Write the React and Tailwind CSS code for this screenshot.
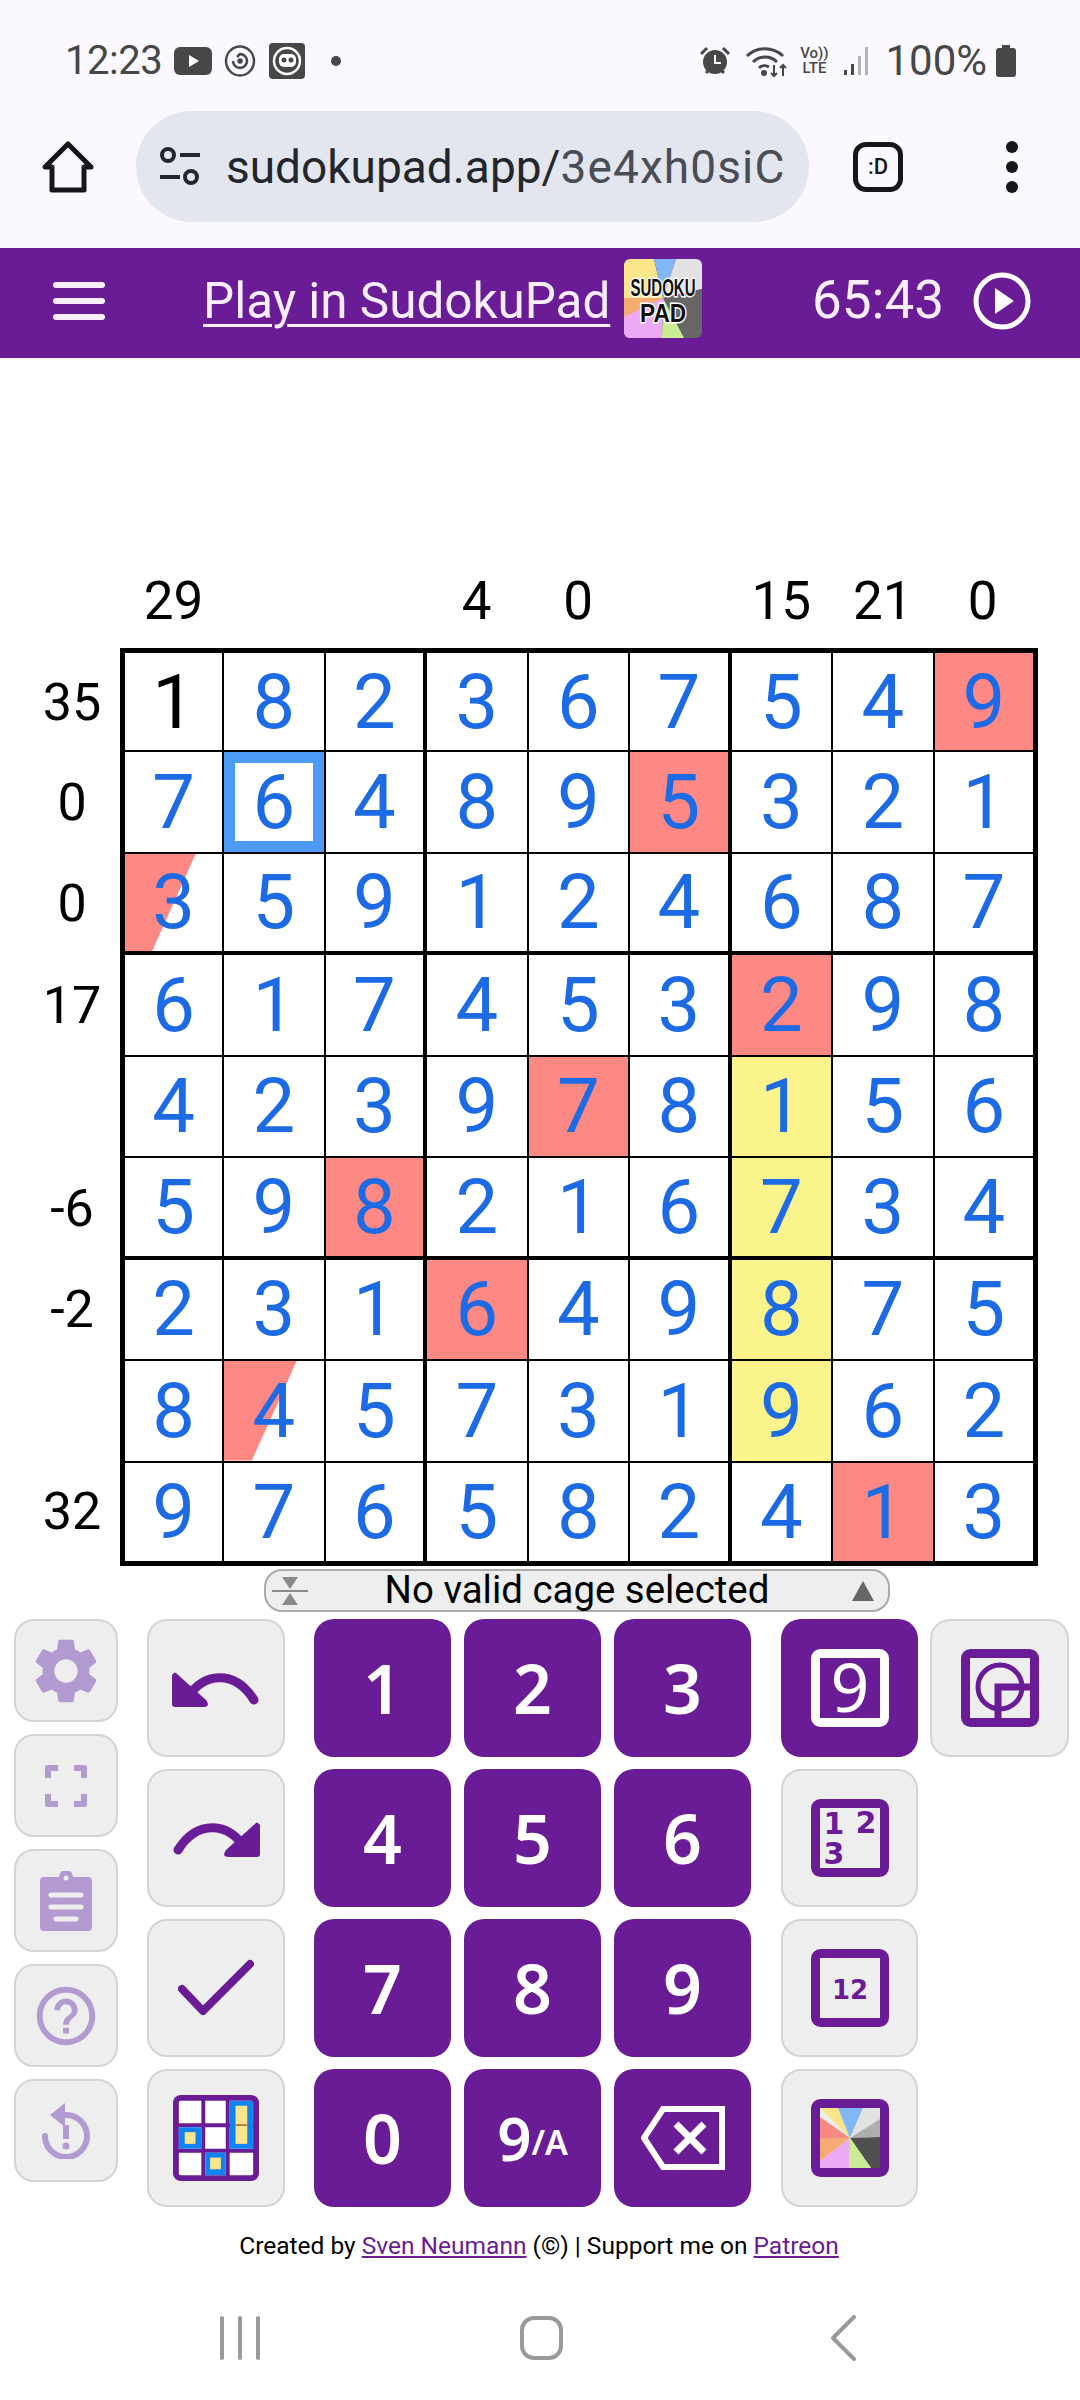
import React from 'react';

const PURPLE = '#6a1b96';

const digits = [
  [1, 8, 2, 3, 6, 7, 5, 4, 9],
  [7, 6, 4, 8, 9, 5, 3, 2, 1],
  [3, 5, 9, 1, 2, 4, 6, 8, 7],
  [6, 1, 7, 4, 5, 3, 2, 9, 8],
  [4, 2, 3, 9, 7, 8, 1, 5, 6],
  [5, 9, 8, 2, 1, 6, 7, 3, 4],
  [2, 3, 1, 6, 4, 9, 8, 7, 5],
  [8, 4, 5, 7, 3, 1, 9, 6, 2],
  [9, 7, 6, 5, 8, 2, 4, 1, 3],
];
const red = ['0-8', '1-5', '3-6', '4-4', '5-2', '6-3', '8-7'];
const yellow = ['4-6', '5-6', '6-6', '7-6'];
const half = ['2-0', '7-1'];
const topClues = ['29', '', '', '4', '0', '', '15', '21', '0'];
const leftClues = ['35', '0', '0', '17', '', '-6', '-2', '', '32'];

const Cell = ({ r, c, value }) => {
  const key = `${r}-${c}`;
  const right = c === 8 ? '' : c === 2 || c === 5 ? 'border-r-[4px]' : 'border-r-2';
  const bottom = r === 8 ? '' : r === 2 || r === 5 ? 'border-b-[4px]' : 'border-b-2';
  const bg = red.includes(key) ? 'bg-[#fd8884]' : yellow.includes(key) ? 'bg-[#fbf38c]' : 'bg-white';
  const given = key === '0-0';
  return (
    <div className={`relative flex items-center justify-center border-black ${right} ${bottom} ${bg}`}>
      {half.includes(key) && (
        <div className="absolute inset-0 bg-[#fd8884] [clip-path:polygon(0_0,73%_0,28%_100%,0_100%)]" />
      )}
      {key === '1-1' && <div className="absolute inset-0 border-[11px] border-[#4b9bf7]" />}
      <span className={`relative text-[76px] leading-none ${given ? 'text-black' : 'text-[#1d6ae5]'}`}>{value}</span>
    </div>
  );
};

const LightBtn = ({ className, children }) => (
  <div className={`flex items-center justify-center rounded-[20px] border-2 border-[#d4d4d4] bg-[#eeeeee] ${className}`}>
    {children}
  </div>
);

const NumBtn = ({ children }) => (
  <div className="flex h-[138px] items-center justify-center rounded-[20px] bg-[#6a1b96] pb-[1px] font-['Noto_Sans',sans-serif] text-[68px] font-semibold leading-none text-white">
    {children}
  </div>
);

const Frame = ({ children, color = PURPLE }) => (
  <svg width="78" height="78" viewBox="0 0 78 78">
    <rect x="4.5" y="4.5" width="69" height="69" rx="5" fill="none" stroke={color} strokeWidth="9" />
    {children}
  </svg>
);

const wedges = [
  ['M39 39L9 9H27Z', '#fbe58a'],
  ['M39 39L27 9H52Z', '#7fb8f5'],
  ['M39 39L52 9H69V20Z', '#e2e2e2'],
  ['M39 39L69 20V38Z', '#aeaeae'],
  ['M39 39L69 38V69H60Z', '#505050'],
  ['M39 39L60 69H38Z', '#c9ec94'],
  ['M39 39L38 69H9V62Z', '#ecaaf5'],
  ['M39 39L9 62V40Z', '#f6ab72'],
  ['M39 39L9 40V18Z', '#f68a80'],
];

export default function App() {
  return (
    <div className="flex h-[2400px] w-[1080px] flex-col overflow-hidden bg-white font-[Roboto,sans-serif]">
      {/* status bar + browser bar */}
      <div className="h-[248px] bg-[#fbf9ff]">
        <div className="flex h-[111px] items-center pl-[65px] pr-[64px] pt-[11px] text-[#474747]">
          <span className="w-[109px] text-[40px] leading-none tracking-[-0.5px]">12:23</span>
          <svg width="38" height="28" viewBox="0 0 38 28">
            <rect width="38" height="28" rx="6" fill="#474747" />
            <path d="M15 8l10 6-10 6z" fill="#fff" />
          </svg>
          <svg className="ml-[11px]" width="34" height="32" viewBox="0 0 34 32" fill="none" stroke="#474747" strokeWidth="2.5">
            <ellipse cx="17" cy="16" rx="14" ry="14.5" />
            <path d="M10 16a7 7 0 1 0 7-7l-3 3" />
            <circle cx="17" cy="16" r="1.5" fill="#474747" />
          </svg>
          <svg className="ml-[12px]" width="36" height="36" viewBox="0 0 36 36">
            <rect width="36" height="36" rx="4" fill="#474747" />
            <circle cx="18" cy="18" r="13" fill="none" stroke="#fff" strokeWidth="2.5" />
            <rect x="10" y="11" width="17" height="13" rx="5" fill="#fff" />
            <circle cx="15" cy="17" r="2.5" fill="#474747" />
            <circle cx="22" cy="17" r="2.5" fill="#474747" />
          </svg>
          <span className="ml-[26px] h-[10px] w-[10px] rounded-full bg-[#474747]" />
          <div className="flex-1" />
          <svg width="30" height="30" viewBox="0 0 30 30">
            <circle cx="15" cy="16" r="12" fill="#474747" />
            <path d="M15 9v8h6" fill="none" stroke="#fff" strokeWidth="2" />
            <path d="M1 8l6-6M29 8l-6-6M6 27l3-3M24 27l-3-3" stroke="#474747" strokeWidth="3" />
          </svg>
          <svg className="ml-[15px]" width="44" height="32" viewBox="0 0 44 32" fill="none" stroke="#474747" strokeWidth="3">
            <path d="M2 11a26 26 0 0 1 36 0M8 17a17 17 0 0 1 24 0M14 23a8 8 0 0 1 10-1" />
            <circle cx="19" cy="28" r="1.5" fill="#474747" />
            <path d="M29 20v11M26 28l3 3 3-3M38 31V20M35 23l3-3 3 3" strokeWidth="2" />
          </svg>
          <div className="ml-[9px] flex w-[32px] flex-col items-center text-[15px] font-medium leading-[15px]">
            <span>Vo))</span>
            <span>LTE</span>
          </div>
          <svg className="ml-[14px]" width="26" height="30" viewBox="0 0 26 30">
            <rect x="0" y="24" width="3" height="5" fill="#474747" />
            <rect x="7" y="18" width="3" height="11" fill="#474747" />
            <rect x="14" y="10" width="3" height="19" fill="#b5b5b5" />
            <rect x="21" y="1" width="3" height="28" fill="#b5b5b5" />
          </svg>
          <span className="ml-[15px] text-[42px] leading-none">100%</span>
          <svg className="ml-[9px]" width="20" height="32" viewBox="0 0 20 32">
            <path d="M6 0h8v3h3a3 3 0 0 1 3 3v23a3 3 0 0 1-3 3H3a3 3 0 0 1-3-3V6a3 3 0 0 1 3-3h3z" fill="#474747" />
          </svg>
        </div>
        <div className="flex h-[111px] items-center">
          <svg className="ml-[41px]" width="54" height="54" viewBox="0 0 54 54" fill="none" stroke="#15171c" strokeWidth="5" strokeLinejoin="round">
            <path d="M27 4L4 27h7v23h32V27h7z" />
          </svg>
          <div className="ml-[41px] flex h-[111px] w-[673px] items-center rounded-full bg-[#e3e6ee]">
            <svg className="ml-[23px]" width="42" height="42" viewBox="0 0 42 42" fill="none" stroke="#23262c" strokeWidth="4">
              <circle cx="9" cy="9" r="6" />
              <path d="M21 9h20M1 31h20" />
              <circle cx="32" cy="31" r="6" />
            </svg>
            <div className="ml-[25px] w-[562px] overflow-hidden whitespace-nowrap text-[46px] leading-[56px] text-[#23262c]">
              sudokupad.app/<span className="tracking-[1.1px] text-[#4a4d55]">3e4xh0siC</span>
            </div>
          </div>
          <div className="ml-[44px] flex h-[50px] w-[50px] items-center justify-center rounded-[13px] border-[5px] border-[#15171c] text-[22px] font-medium leading-none text-[#15171c]">
            :D
          </div>
          <div className="ml-[103px] flex flex-col gap-[8px]">
            <span className="h-[12px] w-[12px] rounded-full bg-[#15171c]" />
            <span className="h-[12px] w-[12px] rounded-full bg-[#15171c]" />
            <span className="h-[12px] w-[12px] rounded-full bg-[#15171c]" />
          </div>
        </div>
      </div>

      {/* purple header */}
      <div className="flex h-[110px] items-center bg-[#6a1b96] pb-[5px] text-[#f8eefc]">
        <div className="ml-[53px] flex w-[52px] flex-col gap-[10px]">
          <span className="h-[6px] rounded-full bg-[#f8eefc]" />
          <span className="h-[6px] rounded-full bg-[#f8eefc]" />
          <span className="h-[6px] rounded-full bg-[#f8eefc]" />
        </div>
        <a className="ml-[98px] w-[410px] whitespace-nowrap text-[49.4px] leading-[58px] underline decoration-[3px] underline-offset-[6px]">
          Play in SudokuPad
        </a>
        <svg className="-mt-[4px] ml-[11px] rounded-[6px]" width="78" height="79" viewBox="0 0 78 79">
          <path d="M0 0H30L39 39L0 39Z" fill="#fbe58a" />
          <path d="M30 0H52L39 39Z" fill="#7fb8f5" />
          <path d="M52 0H78V30L39 39Z" fill="#e2e2e2" />
          <path d="M78 30V79H55L39 39Z" fill="#666" />
          <path d="M0 39H39L20 79H0Z" fill="#f6ab72" />
          <path d="M0 58L39 39L38 79H0Z" fill="#ecaaf5" />
          <path d="M39 39L38 79H60Z" fill="#c9ec94" />
          <text x="39" y="37" textAnchor="middle" fontFamily="'Liberation Sans',sans-serif" fontWeight="700" fontSize="24" textLength="65" lengthAdjust="spacingAndGlyphs" fill="#111" stroke="#fff" strokeWidth="3" paintOrder="stroke">SUDOKU</text>
          <text x="39" y="63" textAnchor="middle" fontFamily="'Liberation Sans',sans-serif" fontWeight="700" fontSize="25" textLength="46" lengthAdjust="spacingAndGlyphs" fill="#111" stroke="#fff" strokeWidth="3" paintOrder="stroke">PAD</text>
        </svg>
        <span className="ml-[110px] w-[131px] whitespace-nowrap text-[53px] leading-none">65:43</span>
        <svg className="ml-[30px]" width="58" height="58" viewBox="0 0 58 58">
          <circle cx="29" cy="29" r="26" fill="none" stroke="#fff" strokeWidth="5" />
          <path d="M22 16l19 13-19 13z" fill="#fff" />
        </svg>
      </div>

      {/* board */}
      <div className="ml-[120px] mt-[192px] grid h-[98px] w-[918px] grid-cols-[99px_repeat(7,101.5px)_98.5px] px-[5px] pt-[4px]">
        {topClues.map((t, i) => (
          <div key={i} className="flex items-center justify-center pr-[2px] text-[53px] leading-none text-black">{t}</div>
        ))}
      </div>
      <div className="flex h-[918px]">
        <div className="grid h-full w-[120px] grid-rows-[99px_repeat(7,101.5px)_98.5px] py-[5px] pl-[24px]">
          {leftClues.map((t, i) => (
            <div key={i} className="flex items-center justify-center text-[52px] leading-none text-black">{t}</div>
          ))}
        </div>
        <div className="grid h-full w-[918px] grid-cols-[99px_repeat(7,101.5px)_98.5px] grid-rows-[99px_repeat(7,101.5px)_98.5px] border-[5px] border-black">
          {digits.map((row, r) => row.map((v, c) => <Cell key={`${r}${c}`} r={r} c={c} value={v} />))}
        </div>
      </div>

      {/* cage selector */}
      <div className="ml-[264px] mt-[3px] flex h-[43px] w-[626px] items-center rounded-[18px] border-2 border-[#aaaaaa] bg-[#eeeeee] pl-[6px] pr-[14px]">
        <svg width="36" height="28" viewBox="0 0 36 28">
          <path d="M10 0h16l-8 12zM10 28h16l-8-12z" fill="#8a8a8a" />
          <path d="M0 14h36" stroke="#8a8a8a" strokeWidth="2" />
        </svg>
        <span className="flex-1 whitespace-nowrap pr-[6px] text-center text-[38.4px] leading-none text-black">No valid cage selected</span>
        <svg width="22" height="20" viewBox="0 0 22 20"><path d="M11 0l11 20H0z" fill="#666" /></svg>
      </div>

      {/* controls */}
      <div className="ml-[14px] mt-[7px] flex">
        <div className="flex w-[104px] flex-col gap-[12px]">
          <LightBtn className="h-[103px]">
            <svg width="78" height="78" viewBox="0 0 24 24" fill="#b39ad1">
              <path d="M19.14 12.94c.04-.3.06-.61.06-.94 0-.32-.02-.64-.07-.94l2.03-1.58c.18-.14.23-.41.12-.61l-1.92-3.32c-.12-.22-.37-.29-.59-.22l-2.39.96c-.5-.38-1.03-.7-1.62-.94l-.36-2.54c-.04-.24-.24-.41-.48-.41h-3.84c-.24 0-.43.17-.47.41l-.36 2.54c-.59.24-1.13.57-1.62.94l-2.39-.96c-.22-.08-.47 0-.59.22L2.74 8.87c-.12.21-.08.47.12.61l2.03 1.58c-.05.3-.09.63-.09.94s.02.64.07.94l-2.03 1.58c-.18.14-.23.41-.12.61l1.92 3.32c.12.22.37.29.59.22l2.39-.96c.5.38 1.03.7 1.62.94l.36 2.54c.05.24.24.41.48.41h3.84c.24 0 .44-.17.47-.41l.36-2.54c.59-.24 1.13-.56 1.62-.94l2.39.96c.22.08.47 0 .59-.22l1.92-3.32c.12-.22.07-.47-.12-.61l-2.01-1.58zM12 15.6c-1.98 0-3.6-1.62-3.6-3.6s1.62-3.6 3.6-3.6 3.6 1.62 3.6 3.6-1.62 3.6-3.6 3.6z" />
            </svg>
          </LightBtn>
          <LightBtn className="h-[103px]">
            <svg width="42" height="42" viewBox="0 0 42 42" fill="none" stroke="#b39ad1" strokeWidth="6" strokeLinejoin="round">
              <path d="M3 13V3h10M29 3h10v10M39 29v10H29M13 39H3V29" />
            </svg>
          </LightBtn>
          <LightBtn className="h-[103px]">
            <svg width="52" height="60" viewBox="0 0 52 60">
              <path d="M4 6h15a7 7 0 0 1 14 0h15a4 4 0 0 1 4 4v46a4 4 0 0 1-4 4H4a4 4 0 0 1-4-4V10a4 4 0 0 1 4-4z" fill="#b39ad1" />
              <circle cx="26" cy="7" r="2.5" fill="#eeeeee" />
              <path d="M11 24h30M11 36h30M16 48h20" stroke="#eeeeee" strokeWidth="5" strokeLinecap="round" />
            </svg>
          </LightBtn>
          <LightBtn className="h-[103px]">
            <svg width="70" height="70" viewBox="0 0 24 24" fill="#b39ad1">
              <path d="M11 18h2v-2h-2v2zm1-16C6.48 2 2 6.48 2 12s4.48 10 10 10 10-4.48 10-10S17.52 2 12 2zm0 18c-4.41 0-8-3.59-8-8s3.59-8 8-8 8 3.59 8 8-3.59 8-8 8zm0-14c-2.21 0-4 1.79-4 4h2c0-1.1.9-2 2-2s2 .9 2 2c0 2-3 1.75-3 5h2c0-2.25 3-2.5 3-5 0-2.21-1.79-4-4-4z" />
            </svg>
          </LightBtn>
          <LightBtn className="h-[103px]">
            <svg width="48" height="56" viewBox="0 0 48 56">
              <path d="M3 33a21 21 0 1 0 21-21h-6" fill="none" stroke="#b39ad1" strokeWidth="6" strokeLinecap="round" />
              <path d="M23 0v24L8 12z" fill="#b39ad1" />
              <path d="M24 22v14" stroke="#b39ad1" strokeWidth="6" />
              <circle cx="24" cy="43" r="3.5" fill="#b39ad1" />
            </svg>
          </LightBtn>
        </div>

        <div className="ml-[29px] flex w-[138px] flex-col gap-[12px]">
          <LightBtn className="h-[138px] pt-[3px]">
            <svg width="88" height="36" viewBox="0 0 88 36">
              <path d="M17 24C30 2 62 -4 82 28" fill="none" stroke={PURPLE} strokeWidth="9" strokeLinecap="round" />
              <path d="M2 1q1-1 2 0l30 27q5 7-3 7H3q-3 0-3-3V3z" fill={PURPLE} />
            </svg>
          </LightBtn>
          <LightBtn className="h-[138px] pt-[3px]">
            <svg width="88" height="36" viewBox="0 0 88 36">
              <path d="M71 24C58 2 26 -4 6 28" fill="none" stroke={PURPLE} strokeWidth="9" strokeLinecap="round" />
              <path d="M86 1q-1-1-2 0l-30 27q-5 7 3 7h28q3 0 3-3V3z" fill={PURPLE} />
            </svg>
          </LightBtn>
          <LightBtn className="h-[138px]">
            <svg width="76" height="58" viewBox="0 0 76 58" fill="none" stroke={PURPLE} strokeWidth="8" strokeLinecap="round" strokeLinejoin="round">
              <path d="M4 30l21 22L72 5" />
            </svg>
          </LightBtn>
          <LightBtn className="h-[138px]">
            <svg width="86" height="86" viewBox="0 0 88 88">
              <rect x="0" y="0" width="88" height="88" rx="8" fill={PURPLE} />
              <rect x="6" y="6" width="76" height="76" fill="#fff" rx="2" />
              <path d="M31 4v80M56 4v80M4 31h80M4 57h80" stroke={PURPLE} strokeWidth="4" />
              <rect x="58" y="6" width="24" height="49" fill="#1083f2" />
              <rect x="6" y="33" width="23" height="22" fill="#1083f2" />
              <rect x="33" y="59" width="21" height="23" fill="#1083f2" />
              <rect x="64" y="11" width="12" height="39" fill="#fbe58a" />
              <rect x="64" y="30" width="12" height="1.5" fill="#a0602a" />
              <rect x="12" y="38" width="11" height="12" fill="#fbe58a" />
              <rect x="38" y="64" width="11" height="12" fill="#fbe58a" />
            </svg>
          </LightBtn>
        </div>

        <div className="ml-[29px] grid w-[437px] grid-cols-3 gap-x-[13px] gap-y-[12px]">
          {['1', '2', '3', '4', '5', '6', '7', '8', '9', '0'].map((n) => <NumBtn key={n}>{n}</NumBtn>)}
          <NumBtn>
            <span className="text-[60px]">9</span>
            <span className="pt-[8px] text-[34px]">/A</span>
          </NumBtn>
          <NumBtn>
            <svg width="84" height="64" viewBox="0 0 84 64" fill="none" stroke="#fff" strokeWidth="6">
              <path d="M22 3h59v58H22L3 32z" />
              <path d="M35 18l28 28M63 18L35 46" strokeWidth="7" />
            </svg>
          </NumBtn>
        </div>

        <div className="ml-[30px] flex w-[137px] flex-col gap-[12px]">
          <div className="flex h-[138px] items-center justify-center rounded-[20px] bg-[#6a1b96]">
            <Frame color="#fff">
              <text x="39" y="63" textAnchor="middle" fontFamily="'Noto Sans',sans-serif" fontSize="68" fill="#fff">9</text>
            </Frame>
          </div>
          <LightBtn className="h-[138px]">
            <Frame>
              <text x="23" y="35" textAnchor="middle" fontFamily="'DejaVu Sans',sans-serif" fontWeight="700" fontSize="30" fill={PURPLE}>1</text>
              <text x="55" y="34" textAnchor="middle" fontFamily="'DejaVu Sans',sans-serif" fontWeight="700" fontSize="30" fill={PURPLE}>2</text>
              <text x="23" y="65" textAnchor="middle" fontFamily="'DejaVu Sans',sans-serif" fontWeight="700" fontSize="30" fill={PURPLE}>3</text>
            </Frame>
          </LightBtn>
          <LightBtn className="h-[138px]">
            <Frame>
              <text x="39" y="50" textAnchor="middle" fontFamily="'DejaVu Sans',sans-serif" fontWeight="700" fontSize="26" fill={PURPLE}>12</text>
            </Frame>
          </LightBtn>
          <LightBtn className="h-[138px]">
            <Frame>
              {wedges.map(([d, fill]) => <path key={d} d={d} fill={fill} />)}
            </Frame>
          </LightBtn>
        </div>

        <div className="ml-[12px] w-[139px]">
          <LightBtn className="h-[138px]">
            <Frame>
              <circle cx="39" cy="38" r="22" fill="none" stroke={PURPLE} strokeWidth="5" />
              <path d="M37 74V38H74" fill="none" stroke={PURPLE} strokeWidth="7" />
            </Frame>
          </LightBtn>
        </div>
      </div>

      {/* footer */}
      <div className="mt-[25px] whitespace-nowrap pr-[2px] text-center text-[24.5px] leading-[28px] text-black">
        Created by <a className="text-[#6a1b96] underline">Sven Neumann</a> (©) | Support me on <a className="text-[#6a1b96] underline">Patreon</a>
      </div>

      {/* android nav */}
      <div className="ml-[220px] mt-[55px] flex items-center">
        <div className="flex w-[40px] justify-between">
          <span className="h-[44px] w-[4px] rounded-full bg-[#9a9a9a]" />
          <span className="h-[44px] w-[4px] rounded-full bg-[#9a9a9a]" />
          <span className="h-[44px] w-[4px] rounded-full bg-[#9a9a9a]" />
        </div>
        <div className="ml-[260px] h-[44px] w-[43px] rounded-[14px] border-[4px] border-[#9a9a9a]" />
        <svg className="ml-[267px]" width="26" height="46" viewBox="0 0 26 46" fill="none" stroke="#9a9a9a" strokeWidth="4" strokeLinecap="round" strokeLinejoin="round">
          <path d="M24 2L3 23l21 21" />
        </svg>
      </div>
    </div>
  );
}
